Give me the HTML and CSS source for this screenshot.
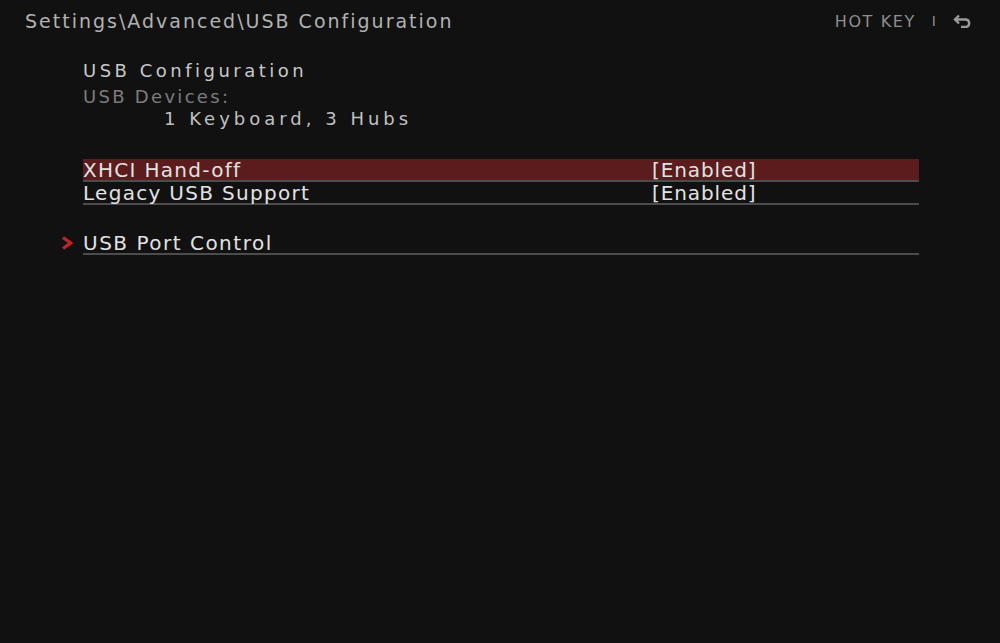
FILE: index.html
```html
<!DOCTYPE html>
<html>
<head>
<meta charset="utf-8">
<link rel="stylesheet" href="styles.css">
</head>
<body>
<div class="screen">
  <header class="topbar">
    <div class="path">Settings\Advanced\USB Configuration</div>
    <div class="hotkey">
      <span>HOT KEY</span>
      <span class="sep">I</span>
      <svg class="back" width="19" height="14" viewBox="0 0 19 14"><path d="M6 1.5 L2 5.5 L6 9.5 M2 5.5 H13 A3.8 3.8 0 0 1 13 13 H8" fill="none" stroke="#9a9a9a" stroke-width="2.4"/></svg>
    </div>
  </header>
  <main class="content">
    <div class="heading">USB Configuration</div>
    <div class="devices-label">USB Devices:</div>
    <div class="devices-value">1 Keyboard, 3 Hubs</div>
    <div class="rows">
      <div class="row selected"><span class="name">XHCI Hand-off</span><span class="value">[Enabled]</span></div>
      <div class="row"><span class="name">Legacy USB Support</span><span class="value">[Enabled]</span></div>
      <div class="spacer"></div>
      <div class="row sub">
        <svg class="chev" width="12" height="14" viewBox="0 0 12 14"><path d="M2 1.5 L9.5 7 L2 12.5" fill="none" stroke="#c0242a" stroke-width="3.4"/></svg>
        <span class="name">USB Port Control</span>
      </div>
    </div>
  </main>
</div>
</body>
</html>
```

FILE: styles.css
```css
html, body {
  margin: 0;
  padding: 0;
  background: #111111;
}
.screen {
  width: 1000px;
  height: 643px;
  background: #111111;
  font-family: "DejaVu Sans", "Liberation Sans", sans-serif;
  color: #dcdcdc;
  position: relative;
  overflow: hidden;
}
.topbar {
  display: flex;
  justify-content: space-between;
  align-items: center;
  padding: 9px 28px 0 25px;
  height: 24px;
}
.path {
  font-size: 19px;
  color: #b2b2b2;
  letter-spacing: 2px;
}
.hotkey {
  display: flex;
  align-items: center;
  font-size: 16px;
  color: #8e8e8e;
  letter-spacing: 1.6px;
}
.hotkey .sep {
  font-size: 14px;
  letter-spacing: 0;
  margin-left: 16px;
  margin-right: 17px;
}
.content {
  padding: 26px 81px 0 83px;
}
.heading {
  font-size: 18px;
  letter-spacing: 3.5px;
  color: #c8c8c8;
  line-height: 24px;
}
.devices-label {
  font-size: 18px;
  color: #7c7c7c;
  letter-spacing: 2.3px;
  line-height: 24px;
  margin-top: 2px;
}
.devices-value {
  font-size: 18px;
  color: #c0c0c0;
  letter-spacing: 4px;
  line-height: 20px;
  padding-left: 81px;
}
.rows {
  margin-top: 30px;
}
.row {
  display: flex;
  align-items: center;
  height: 21px;
  border-bottom: 2px solid #4c4c4c;
  font-size: 20px;
  letter-spacing: 1.3px;
  color: #e2e2e2;
  position: relative;
}
.row.selected {
  background: #5a1c1c;
}
.row .value {
  position: absolute;
  left: 569px;
  letter-spacing: 0.9px;
}
.row.sub {
  letter-spacing: 1.5px;
}
.spacer {
  height: 27px;
}
.chev {
  position: absolute;
  left: -22px;
  top: 4px;
}
```
